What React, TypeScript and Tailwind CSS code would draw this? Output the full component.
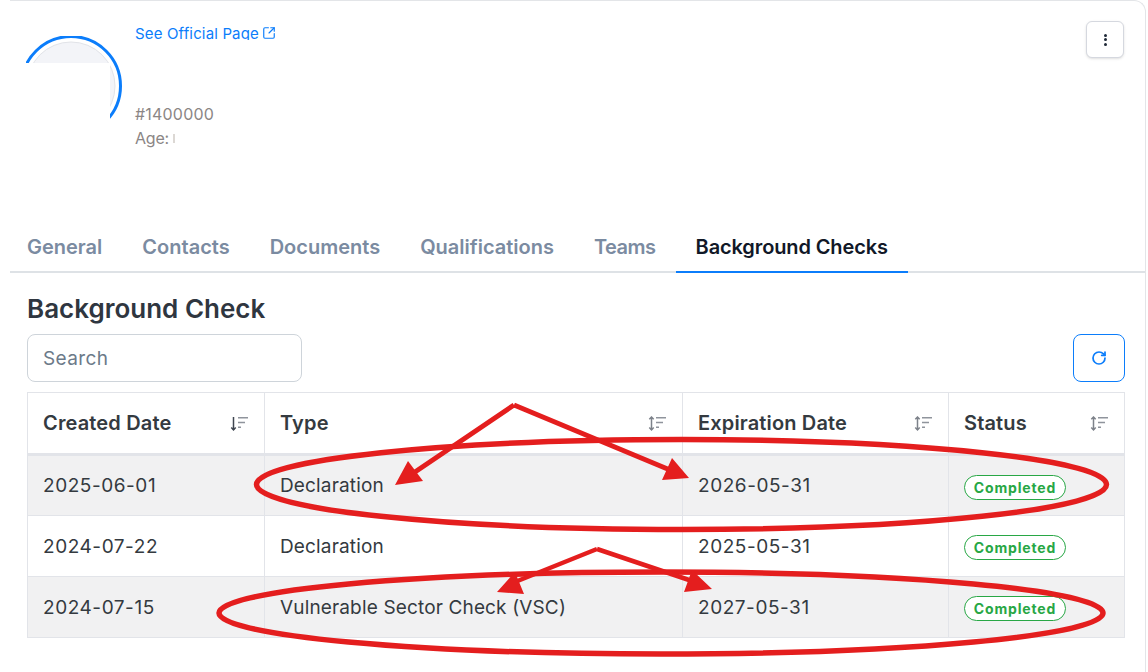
import { RotateCw, SquareArrowOutUpRight } from "lucide-react";

const tabs = [
  { label: "General", fit: "" },
  { label: "Contacts", fit: "" },
  { label: "Documents", fit: "" },
  { label: "Qualifications", fit: "" },
  { label: "Teams", fit: "tracking-[-0.5px]" },
  { label: "Background Checks", fit: "tracking-[-0.12px]" },
];

const rows = [
  { created: "2025-06-01", type: "Declaration", expires: "2026-05-31", shaded: true },
  { created: "2024-07-22", type: "Declaration", expires: "2025-05-31", shaded: false },
  { created: "2024-07-15", type: "Vulnerable Sector Check (VSC)", expires: "2027-05-31", shaded: true },
];

function SortIcon({ active }: { active?: boolean }) {
  const arrow = active ? "#3f4650" : "#7d828a";
  return (
    <svg width="18" height="15" viewBox="0 0 18 15" fill="none" aria-hidden="true">
      {!active && <path d="M3.5 1v13M1.3 3.2 3.5 1l2.2 2.2" stroke={arrow} strokeWidth="1.5" />}
      {active && <path d="M3.5 1v13" stroke={arrow} strokeWidth="1.5" />}
      <path d="M1.3 11.4 3.5 13.8l2.2-2.4" stroke={arrow} strokeWidth="1.5" />
      <path d="M8 1.8h10M8 6.5h7M8 11.2h3" stroke="#8f949c" strokeWidth="1.5" />
    </svg>
  );
}

function Avatar() {
  return (
    <svg width="100" height="116" viewBox="0 0 100 116" fill="none" aria-hidden="true">
      <circle cx="45" cy="50" r="44" fill="#f3f4f8" stroke="#e1e3e8" strokeWidth="1" />
      <circle cx="45" cy="50" r="49.5" stroke="#0b7dfb" strokeWidth="3" />
      {/* blanked out part of the photo */}
      <rect x="-2" y="27" width="86" height="90" fill="#ffffff" />
    </svg>
  );
}

function Badge() {
  return (
    <span className="inline-flex h-[25px] w-[102px] items-center justify-center rounded-full border border-[#28a745] bg-white text-[14px] font-bold tracking-[0.85px] text-[#28a745]">
      Completed
    </span>
  );
}

function Markup() {
  return (
    <svg className="pointer-events-none absolute left-0 top-0" width="1148" height="672" fill="none" aria-hidden="true">
      <ellipse cx="681.5" cy="484.5" rx="425" ry="45" stroke="#e41e1e" strokeWidth="5.5" />
      <ellipse cx="661" cy="613" rx="442" ry="41" stroke="#e41e1e" strokeWidth="5.5" />
      <path d="M514 405 412 474M514 405 670 470" stroke="#e41e1e" strokeWidth="5" />
      <path d="M597 549 510 584M597 549 695 582" stroke="#e41e1e" strokeWidth="4.5" />
      <path d="M395 485 408 461 423 481Z M689 478 672 458 662 480Z M497 592 515 572 524 594Z M712 589 692 570 684 592Z" fill="#e41e1e" />
    </svg>
  );
}

export default function App() {
  return (
    <div className="relative h-[672px] w-[1148px] overflow-hidden bg-white font-['Inter','Liberation_Sans',sans-serif] text-[#343a40]">
      <div className="ml-[10px] h-[672px] w-[1136px] rounded-tr-xl border-r border-t border-[#e3e5e8] bg-white">
        {/* Profile header */}
        <div className="flex h-[226px] items-start">
          <div className="ml-[16px] mt-[35px] h-[110px] w-[98px] overflow-hidden">
            <Avatar />
          </div>
          <div className="ml-[11px] flex flex-col">
            {/* link is cut off at the bottom in the source too */}
            <div className="mt-[24px] flex h-[15px] items-start gap-[3px] overflow-hidden text-[15px] leading-[17px] tracking-[0.15px] text-[#0b7dfb]">
              See Official Page
              <SquareArrowOutUpRight size={14} strokeWidth={2} className="mt-[1px]" />
            </div>
            <div className="mt-[65px] text-[16px] leading-[18px] tracking-[0.2px] text-[#8b8685]">#1400000</div>
            <div className="mt-[6px] flex h-[18px] items-center text-[16px] leading-[18px] tracking-[-0.2px] text-[#8b8685]">
              Age:
              <span className="ml-[4px] h-[9px] w-[2px] bg-[#dcd8d4]" />
            </div>
          </div>
          <button className="ml-auto mr-[21px] mt-[20px] flex h-[37px] w-[38px] flex-col items-center justify-center gap-[1.5px] rounded-md border border-[#d5d8df] bg-white shadow-sm">
            <span className="h-[3px] w-[3px] rounded-full bg-[#1f2937]" />
            <span className="h-[3px] w-[3px] rounded-full bg-[#1f2937]" />
            <span className="h-[3px] w-[3px] rounded-full bg-[#1f2937]" />
          </button>
        </div>

        {/* Tabs */}
        <div className="flex h-[46px] border-b-2 border-[#dee2e6] pl-[17px]">
          {tabs.map((t, i) => {
            const active = i === tabs.length - 1;
            return (
              <div key={t.label} className={`relative mr-[40px] flex h-[46px] items-center pb-[6px] text-[20px] font-semibold ${t.fit} ${active ? "text-[#111827]" : "text-[#7b8ba1]"}`}>
                {t.label}
                {active && <span className="absolute -left-5 -right-5 bottom-0 h-[2px] bg-[#0b7dfb]" />}
              </div>
            );
          })}
        </div>

        {/* Section */}
        <div className="px-[17px]">
          <h2 className="mt-[20px] text-[26px] font-semibold leading-[32px] text-[#2f3640]">Background Check</h2>
          <div className="mt-[9px] flex items-center justify-between">
            <div className="flex h-[48px] w-[275px] items-center rounded-lg border border-[#ced4da] px-[15px] pt-[2px] text-[19px] tracking-[0.4px] text-[#6c7a89]">
              Search
            </div>
            <button className="mr-[3px] flex h-[48px] w-[52px] items-center justify-center rounded-lg border border-[#0b7dfb] text-[#0b7dfb]">
              <RotateCw size={16} strokeWidth={2.6} />
            </button>
          </div>

          <table className="mt-[10px] w-[1097px] table-fixed border-collapse text-[19px] tracking-[0.15px]">
            <colgroup>
              <col className="w-[237px]" />
              <col className="w-[418px]" />
              <col className="w-[266px]" />
              <col className="w-[176px]" />
            </colgroup>
            <thead>
              <tr className="h-[62px] border-b-[3px] border-[#e2e4e9]">
                {["Created Date", "Type", "Expiration Date", "Status"].map((h, i) => (
                  <th key={h} className="border border-b-0 border-[#e2e4e9] pl-[15px] pr-[16px] text-left text-[20px] font-semibold tracking-[0.15px]">
                    <div className="flex items-center justify-between">
                      {h}
                      <SortIcon active={i === 0} />
                    </div>
                  </th>
                ))}
              </tr>
            </thead>
            <tbody>
              {rows.map((r) => (
                <tr key={r.created} className={`h-[61px] ${r.shaded ? "bg-[#f1f1f2]" : "bg-white"}`}>
                  <td className="border border-[#e2e4e9] px-[15px] pt-[2px] tracking-[0.55px]">{r.created}</td>
                  <td className="border border-[#e2e4e9] px-[15px] pt-[2px]">{r.type}</td>
                  <td className="border border-[#e2e4e9] px-[15px] pt-[2px] tracking-[0.55px]">{r.expires}</td>
                  <td className="border border-[#e2e4e9] px-[15px]">
                    <div className="mt-[3px] flex"><Badge /></div>
                  </td>
                </tr>
              ))}
            </tbody>
          </table>
        </div>
      </div>
      <Markup />
    </div>
  );
}
